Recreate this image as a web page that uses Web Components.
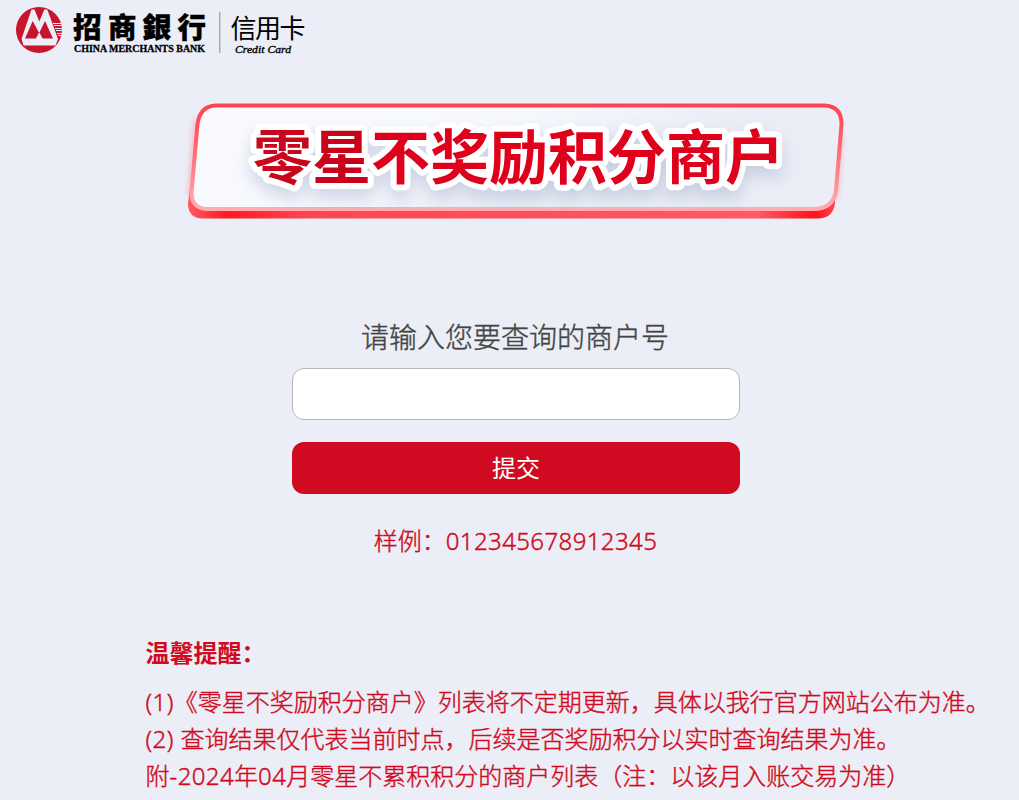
<!DOCTYPE html>
<html lang="zh-CN">
<head>
<meta charset="UTF-8">
<title>零星不奖励积分商户</title>
<style>
  body {
    margin: 0;
    min-height: 800px;
    background-color: #ebeef6;
    font-family: "Noto Sans", "Noto Sans CJK SC", sans-serif;
    overflow: hidden;
  }
</style>
</head>
<body>
<merchant-page>
  <bank-logo slot="logo"></bank-logo>
  <title-banner slot="banner" text="零星不奖励积分商户"></title-banner>
  <merchant-form slot="form" button="提交">
    请输入您要查询的商户号
    <span slot="sample">样例：<latin-text>012345678912345</latin-text></span>
  </merchant-form>
  <tips-box slot="tips">
    <span slot="title">温馨提醒：</span>
    <div><latin-text>(1)</latin-text>《零星不奖励积分商户》列表将不定期更新，具体以我行官方网站公布为准。</div>
    <div><latin-text>(2) </latin-text>查询结果仅代表当前时点，后续是否奖励积分以实时查询结果为准。</div>
    <div>附<latin-text>-2024</latin-text>年<latin-text>04</latin-text>月零星不累积积分的商户列表（注：以该月入账交易为准）</div>
  </tips-box>
</merchant-page>

<script>
function define(name, html) {
  const template = document.createElement('template')
  template.innerHTML = html.trim()

  customElements.define(name, class extends HTMLElement {
    constructor() {
      super()
      this.attachShadow({ mode: 'open' })
      this.shadowRoot.appendChild(template.content.cloneNode(true))
    }
  })
}

define('latin-text', `
<style>
  :host {
    letter-spacing: 0.4px;
    white-space: pre;
  }
</style><slot></slot>
`)

define('bank-logo', `
<style>
  :host {
    display: block;
    height: 60px;
  }

  svg {
    display: block;
  }

  .cn {
    font-family: "Noto Sans CJK SC", sans-serif;
  }

  .en {
    font-family: "Liberation Serif", serif;
  }
</style>
<svg width="320" height="60" viewBox="0 0 320 60">
  <circle cx="39" cy="30" r="23" fill="#c8152d"/>
  <path d="M21.500 39 L31.500 9.500 H34.500 L39.300 21.500 L44.300 9.500 H47.300 L58 39 L55.500 45.500 H23.500 Z" fill="#ebeef6"/>
  <path d="M25 38.500 L32.700 21 L39.200 33 L45 21 L53 38.500 H42.500 L39.200 32 L36 38.500 Z" fill="#c8152d"/>
  <g stroke="#ebeef6" stroke-width="1">
    <path d="M53 23.500 H63 M54 25.500 H63 M55 28.500 H63 M56 30.500 H63 M57 33.500 H63 M58 35.500 H63"/>
  </g>
  <g class="cn" font-size="28.500" font-weight="900" stroke="#000" stroke-width="0.4">
    <text x="73" y="37.500">招</text>
    <text x="108" y="37.500">商</text>
    <text x="142.500" y="37.500">銀</text>
    <text x="177.500" y="37.500">行</text>
  </g>
  <text class="en" x="74" y="52" font-size="9.800" font-weight="700" textLength="131" lengthAdjust="spacingAndGlyphs" stroke="#000" stroke-width="0.3">CHINA MERCHANTS BANK</text>
  <rect x="219" y="12" width="1.500" height="41" fill="#a8a9ad"/>
  <text class="cn" x="230.500" y="37.500" font-size="26" textLength="75">信用卡</text>
  <text class="en" x="235" y="52.500" font-size="10.500" font-style="italic" textLength="56" lengthAdjust="spacingAndGlyphs" stroke="#000" stroke-width="0.35">Credit Card</text>
</svg>
`)

define('tips-box', `
<style>
  :host {
    display: block;
    font-size: 24px;
    line-height: 37px;
    font-weight: 300;
    -webkit-text-stroke: 0.4px;
    color: #d00a20;
    white-space: nowrap;
  }

  .title {
    margin-bottom: 12px;
    font-weight: 700;
    -webkit-text-stroke: 0;
  }
</style>
<div class="title"><slot name="title"></slot></div>
<slot></slot>
`)

define('merchant-page', `
<style>
  :host {
    display: flex;
    flex-direction: column;
    height: 800px;
  }

  .banner {
    display: flex;
    justify-content: center;
    padding: 38px 0 94px;
    margin-right: -13px;
  }

  .form {
    display: flex;
    justify-content: center;
    padding-left: 13px;
  }

  .tips {
    padding: 74px 0 0 145.5px;
  }
</style>
<slot name="logo"></slot>
<div class="banner"><slot name="banner"></slot></div>
<div class="form"><slot name="form"></slot></div>
<div class="tips"><slot name="tips"></slot></div>
`)

const bannerTemplate = document.createElement('template')

bannerTemplate.innerHTML = `
<style>
  :host {
    display: block;
    width: 664px;
    height: 126px;
  }

  svg {
    display: block;
  }

  text {
    font-family: "Noto Sans CJK SC", sans-serif;
    font-size: 59px;
    font-weight: 700;
    fill: url(#ink);
    stroke: #fff;
    stroke-width: 12px;
    stroke-linejoin: round;
    paint-order: stroke;
    filter: drop-shadow(0 9px 8px rgba(120, 135, 180, 0.3));
  }
</style>
<svg width="664" height="126" viewBox="184 98 664 126">
  <defs>
    <linearGradient id="face" x1="0" y1="0" x2="1" y2="0.400">
      <stop offset="0" stop-color="#fafbff"/>
      <stop offset="0.450" stop-color="#f7f9fe"/>
      <stop offset="0.750" stop-color="#ebeef6"/>
    </linearGradient>
    <linearGradient id="edge" x1="0" y1="0" x2="0" y2="1">
      <stop offset="0" stop-color="#ff4450"/>
      <stop offset="0.400" stop-color="#ff6670"/>
      <stop offset="1" stop-color="#ffadb2"/>
    </linearGradient>
    <linearGradient id="base" x1="0" y1="0" x2="1" y2="0">
      <stop offset="0" stop-color="#ff5964"/>
      <stop offset="0.060" stop-color="#ff1a22"/>
      <stop offset="0.180" stop-color="#ff4552"/>
      <stop offset="0.880" stop-color="#ff5964"/>
      <stop offset="0.970" stop-color="#ff1219"/>
      <stop offset="1" stop-color="#ff4450"/>
    </linearGradient>
    <linearGradient id="ink" x1="0" y1="0" x2="1" y2="0">
      <stop offset="0" stop-color="#c70a1f"/>
      <stop offset="0.200" stop-color="#c90018"/>
      <stop offset="0.230" stop-color="#df001c"/>
    </linearGradient>
    <filter id="soft" x="-5%" y="-20%" width="110%" height="140%"><feGaussianBlur stdDeviation="2.500"/></filter>
  </defs>
  <path d="M196 120 L190 196 M841 135 L835 200" stroke="#ff5964" stroke-opacity="0.350" stroke-width="5" filter="url(#soft)"/>
  <path d="M190 188 L188 203 Q188 218.500 203 218.500 H818 Q833 218.500 835 203 V188 Z" fill="url(#base)"/>
  <path d="M216 105.500 H824 Q842 106 841.500 125 L836 190 Q834 209 813 209 H207 Q191 208 191.500 192 L197.500 124 Q200 106 216 105.500 Z" fill="url(#face)" stroke="url(#edge)" stroke-width="4"/>
  <text x="253" y="179"></text>
</svg>
`

class TitleBanner extends HTMLElement {
  constructor() {
    super()
    this.attachShadow({ mode: 'open' })
    this.shadowRoot.appendChild(bannerTemplate.content.cloneNode(true))
    this._text = this.shadowRoot.querySelector('text')
  }

  connectedCallback() {
    this._text.textContent = this.getAttribute('text')
  }
}

customElements.define('title-banner', TitleBanner)

const formTemplate = document.createElement('template')

formTemplate.innerHTML = `
<style>
  :host {
    display: flex;
    flex-direction: column;
    width: 448px;
    text-align: center;
  }

  label {
    height: 50px;
    padding-right: 2px;
    font-size: 28px;
    line-height: 38px;
    font-weight: 300;
    -webkit-text-stroke: 0.4px;
    color: #444;
  }

  input {
    box-sizing: border-box;
    height: 52px;
    padding: 0 16px;
    border: 1px solid #b5b6b9;
    border-radius: 12px;
    background: #fff;
    font: inherit;
    font-size: 24px;
    outline: none;
  }

  button {
    height: 52px;
    margin: 22px 0 28px;
    padding: 0 0 4px;
    border: 0;
    border-radius: 12px;
    background: #d00a20;
    color: #fff;
    font: inherit;
    font-size: 24px;
  }

  .sample {
    padding-right: 1px;
    font-size: 24px;
    line-height: 38px;
    font-weight: 300;
    -webkit-text-stroke: 0.4px;
    color: #d00a20;
  }
</style>
<label for="no"><slot></slot></label>
<input id="no" type="text">
<button type="button"></button>
<div class="sample"><slot name="sample"></slot></div>
`

class MerchantForm extends HTMLElement {
  constructor() {
    super()
    this.attachShadow({ mode: 'open' })
    this.shadowRoot.appendChild(formTemplate.content.cloneNode(true))
    this._button = this.shadowRoot.querySelector('button')
  }

  connectedCallback() {
    this._button.textContent = this.getAttribute('button')
  }
}

customElements.define('merchant-form', MerchantForm)
</script>
</body>
</html>
